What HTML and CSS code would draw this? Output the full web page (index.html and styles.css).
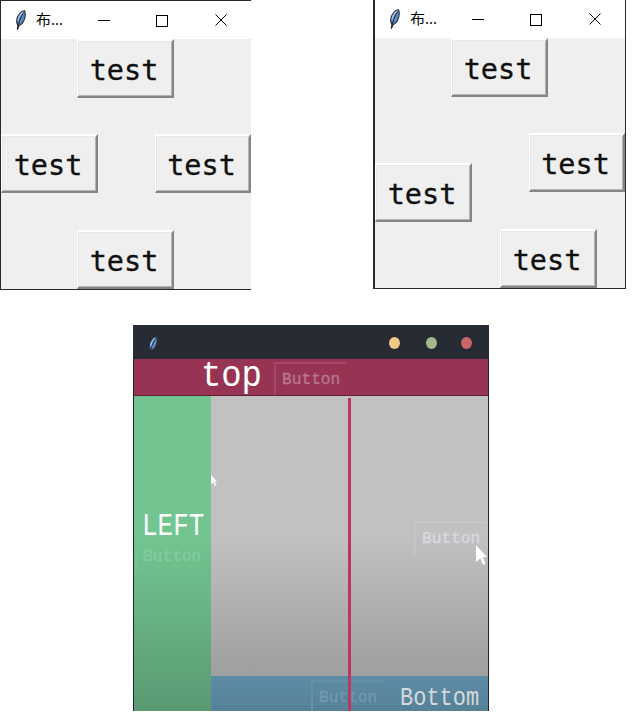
FILE: index.html
```html
<!DOCTYPE html>
<html lang="zh">
<head>
<meta charset="utf-8">
<title>布局</title>
<link rel="stylesheet" href="styles.css">
</head>
<body>
<svg width="0" height="0" class="defs">
  <symbol id="feather" viewBox="0 0 12 20">
    <path d="M3.3 19.5 4 15.5C1.5 12 3 7 5.3 4 7 1.5 9.3.6 10.5.8c1 2.700.8 7-.9 10.500C8.600 13.700 6.800 15 5 15.800Z" fill="#5b8cc6" stroke="#30343c" stroke-width="1.200"/>
    <path d="M3.500 19.500C4.300 13.500 6 8 9.400 3" fill="none" stroke="#182334" stroke-width="1"/>
    <path d="M4 11C4.500 7.500 6.500 4 8.500 2.500" fill="none" stroke="#a9c8ec" stroke-width="1.200"/>
  </symbol>
  <symbol id="pointer" viewBox="0 0 11 20"><path d="M0 0 11 12H7L9.500 18.500 7 20 4.300 13.300 0 17Z" fill="#fff"/></symbol>
</svg>
<div class="row">
  <section class="win first">
    <header class="title"><svg class="feather"><use href="#feather"/></svg><span class="name">布...</span>
      <svg class="controls" width="131" height="13" viewBox="0 0 131 13" fill="none" stroke="#000" shape-rendering="crispEdges"><path d="M0 6.500h12M58.500 1.500h11v11h-11z"/><path d="m117.500.500 11 11m0-11-11 11" shape-rendering="auto"/></svg>
    </header>
    <div class="place"><button class="n">test</button><button class="w">test</button><button class="e">test</button><button class="s">test</button></div>
  </section>
  <section class="win second">
    <header class="title"><svg class="feather"><use href="#feather"/></svg><span class="name">布...</span>
      <svg class="controls" width="131" height="13" viewBox="0 0 131 13" fill="none" stroke="#000" shape-rendering="crispEdges"><path d="M0 6.500h12M58.500 1.500h11v11h-11z"/><path d="m117.500.500 11 11m0-11-11 11" shape-rendering="auto"/></svg>
    </header>
    <div class="place"><button class="n">test</button><button class="w low">test</button><button class="e">test</button><button class="s half">test</button></div>
  </section>
</div>
<section class="dark">
  <header class="bar"><svg class="quill"><use href="#feather"/></svg><i class="dot yellow"></i><i class="dot green"></i><i class="dot red"></i></header>
  <div class="top"><span class="big">top</span><span class="ghost">Button</span></div>
  <div class="body">
    <div class="left"><span class="label">LEFT</span><span class="ghost">Button</span><svg class="tiny"><use href="#pointer"/></svg></div>
    <div class="center"><span class="ghost">Button</span><svg class="cursor"><use href="#pointer"/></svg></div>
    <div class="bottom"><span class="ghost">Button</span><span class="label">Bottom</span></div>
    <div class="guide"></div>
  </div>
</section>
</body>
</html>
```
FILE: styles.css
```css
* { box-sizing: border-box; }
body { margin: 0; background: #fff; width: 638px; height: 728px; overflow: hidden; }
.defs { display: block; }
.row { display: flex; align-items: flex-start; gap: 122px; height: 290px; }
.win { display: flex; flex-direction: column; background: #efefef; }
.first { width: 251px; height: 290px; border: solid #29292c; border-width: 1px 0 1px 1px; }
.second { width: 253px; height: 289px; border: solid #29292c; border-width: 0 1px 1px 2px; }
.title { height: 38px; flex: none; background: #fff; display: flex; align-items: center; padding-left: 13px; }
.name { padding-bottom: 2px; }
.feather { width: 12px; height: 20px; flex: none; }
.name { width: 72px; flex: none; padding-left: 10px; font: 15px/20px "Noto Sans", "Noto Sans CJK SC", sans-serif; color: #000; white-space: nowrap; }
.controls { flex: none; }
.place { display: grid; width: 250px; height: 250px; flex: none; }
.place button { grid-area: 1 / 1; width: 97px; height: 59px; margin: 0; padding: 4px 2px 0 0; border: solid; border-width: 2px 2px 2px 1px; border-color: #fff #858585 #858585 #fff; border-radius: 0; background: #efefef; box-shadow: inset 1px 1px #e7e7e7, inset -1px -1px #b4b4b4; color: #101010; font: 28.500px/36px "DejaVu Sans Mono", monospace; -webkit-text-stroke: .3px #101010; }
.place .n { place-self: start center; margin-right: 1px; }
.place .s { place-self: end center; margin-right: 1px; }
.place .w { place-self: center start; margin-bottom: 1px; }
.place .e { place-self: center end; width: 96px; margin-bottom: 1px; }
.place .low { place-self: start; margin-top: 125px; }
.place .half { place-self: end start; margin-left: 125px; }

.dark { margin: 35px 0 0 133px; width: 356px; height: 386px; border: solid #202027; border-width: 0 1px; font-family: "Liberation Mono", monospace; color: #fff; }
.bar { height: 34px; margin: 0 -1px; background: #262b34; display: flex; align-items: center; padding: 2px 17px 0 14px; }
.quill { width: 11px; height: 18px; margin: 3px auto 0 0; }
.dot { width: 11px; height: 12px; border-radius: 50%; }
.yellow { background: #efca86; margin-right: 26px; }
.green { background: #a3b98b; margin-right: 24px; }
.red { background: #ca6667; }
.top { height: 37px; background: #983453; border-bottom: 1px solid #641f38; display: flex; padding-left: 67px; }
.big { width: 73px; flex: none; font-size: 34px; line-height: 34px; letter-spacing: -.2px; height: 34px; transform: scaleY(1.08); }
.ghost { display: block; flex: none; width: 73px; height: 33px; border: solid; border-width: 2px 0 0 2px; padding: 3px 0 0 6px; font-size: 16.200px; line-height: 27px; -webkit-text-stroke: .4px; }
.top .ghost { margin-top: 3px; border-color: #a44665; color: #b77590; }
.body { position: relative; display: grid; grid-template: 280px 35px / 77px 277px; height: 315px; }
.left { position: relative; z-index: 1; grid-row: 1 / 3; background: linear-gradient(#72c591 0 45%, #5b9a73); padding-top: 117px; }
.label { display: block; transform: scaleY(1.18); }
.left .label { padding-left: 8px; font-size: 26px; line-height: 28px; }
.left .ghost { border-color: #76c292; color: #84cba0; margin: -2px 0 0 1px; }
.tiny { position: absolute; left: 77px; top: 79px; width: 6px; height: 11px; }
.center { position: relative; background: linear-gradient(#c1c1c1 0 50%, #9f9f9f); padding: 125px 0 0 203px; }
.center .ghost { border-color: #c5c6cc; color: #d7d9e0; }
.cursor { position: absolute; left: 265px; top: 149px; width: 11px; height: 20px; }
.bottom { background: linear-gradient(#5d8ca6, #568198); display: flex; padding-left: 100px; }
.bottom .ghost { height: 31px; margin-top: 4px; border-color: #6590a8; color: #7199b0; }
.bottom .label { margin: 10px 0 -1px 16px; font-size: 22px; line-height: 26px; height: 26px; color: #d5d8da; }
.guide { position: absolute; left: 214px; top: 2px; width: 3px; bottom: 0; background: #bd365f; }
```
